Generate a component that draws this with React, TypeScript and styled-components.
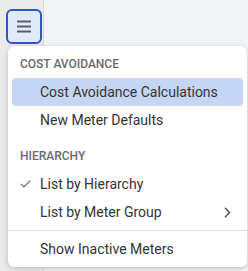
import React from "react";
import styled, { createGlobalStyle } from "styled-components";

const Global = createGlobalStyle`
  html, body { margin: 0; padding: 0; }
  body { font-family: Roboto, "Noto Sans", sans-serif; width: 248px; height: 271px; overflow: hidden; }
`;

const Page = styled.div`
  position: relative;
  display: flex;
  width: 248px;
  height: 271px;
  background: #f2f3f5;
`;

const Sidebar = styled.div`
  width: 44px;
  flex: none;
  background: #ebebeb;
  border-right: 1px solid #d9d9d9;
  padding: 9px 0 0 6px;
  box-sizing: border-box;
`;

const MenuButton = styled.button`
  width: 36px;
  height: 35px;
  box-sizing: border-box;
  border: 2px solid #2f58bd;
  border-radius: 6px;
  background: #e2e9f8;
  display: flex;
  align-items: center;
  justify-content: center;
  padding: 0;
`;

const Main = styled.div`
  flex: 1;
`;

const Menu = styled.div`
  position: absolute;
  left: 8px;
  top: 46px;
  width: 239px;
  box-sizing: border-box;
  background: #fff;
  border-radius: 6px;
  box-shadow: 0 2px 6px rgba(0, 0, 0, 0.18), 0 0 1px rgba(0, 0, 0, 0.15);
  padding: 4px 4px 4px;
`;

const Header = styled.div`
  height: 28px;
  line-height: 28px;
  padding-left: 8px;
  font-size: 12px;
  font-weight: 500;
  color: #666a70;
`;

const Spacer = styled.div`
  height: 8px;
`;

const Item = styled.div<{ $active?: boolean }>`
  position: relative;
  height: 28px;
  display: flex;
  align-items: center;
  padding-left: 28px;
  padding-right: 12px;
  border-radius: 4px;
  font-size: 14px;
  color: #333;
  background: ${(p) => (p.$active ? "#c5d5f4" : "transparent")};
`;

const Label = styled.span`
  flex: 1;
`;

const Check = styled.svg`
  position: absolute;
  left: 8px;
  top: 10px;
`;

const Divider = styled.div`
  height: 1px;
  background: #dcdcdc;
  margin: 4px -4px;
`;

export default function App() {
  return (
    <>
      <Global />
      <Page>
        <Sidebar>
          <MenuButton>
            <svg width="14" height="13" viewBox="0 0 14 13">
              <rect x="0" y="0.5" width="14" height="2" fill="#5b606b" />
              <rect x="0" y="5.5" width="14" height="2" fill="#5b606b" />
              <rect x="0" y="10.5" width="14" height="2" fill="#5b606b" />
            </svg>
          </MenuButton>
        </Sidebar>
        <Main />
        <Menu>
          <Header>COST AVOIDANCE</Header>
          <Item $active>
            <Label>Cost Avoidance Calculations</Label>
          </Item>
          <Item>
            <Label>New Meter Defaults</Label>
          </Item>
          <Spacer />
          <Header>HIERARCHY</Header>
          <Item>
            <Check width="11" height="8" viewBox="0 0 11 8">
              <path d="M0.7 3.8 L3.9 7 L10.3 0.6" fill="none" stroke="#666" strokeWidth="1.2" />
            </Check>
            <Label>List by Hierarchy</Label>
          </Item>
          <Item>
            <Label>List by Meter Group</Label>
            <svg width="7" height="11" viewBox="0 0 7 11">
              <path d="M1 0.8 L5.6 5.5 L1 10.2" fill="none" stroke="#555" strokeWidth="1.5" />
            </svg>
          </Item>
          <Divider />
          <Item>
            <Label>Show Inactive Meters</Label>
          </Item>
        </Menu>
      </Page>
    </>
  );
}
